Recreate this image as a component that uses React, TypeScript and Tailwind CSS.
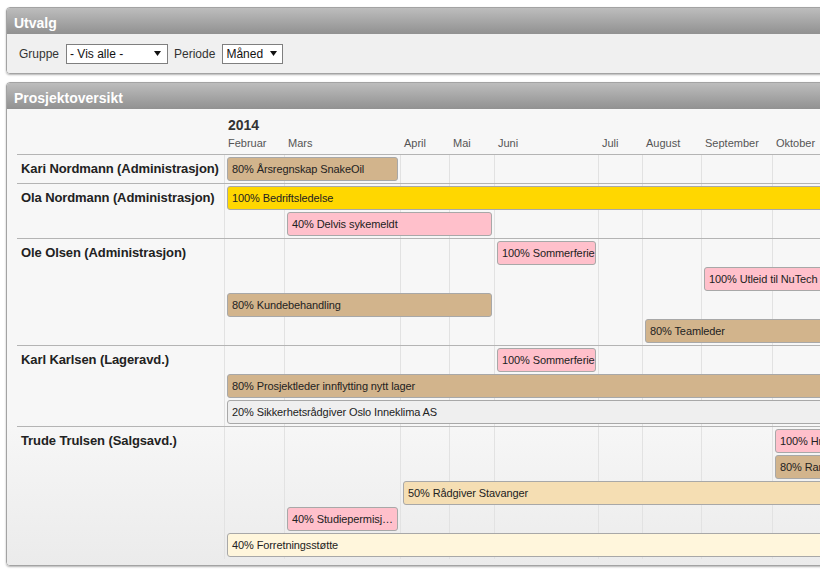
import React from "react";

const COLS = "grid-cols-[207px_60px_116px_49px_45px_104px_44px_59px_71px_70px_70px_70px]";

const months = [
  "Februar",
  "Mars",
  "April",
  "Mai",
  "Juni",
  "Juli",
  "August",
  "September",
  "Oktober",
  "November",
  "Desember",
];

type Bar = { from: number; to?: number; label: string; color: string };
type Person = { name: string; lanes: Bar[] };

const TAN = "bg-[#d2b48c]";
const GOLD = "bg-[#ffd700]";
const PINK = "bg-[#ffc0cb]";
const GRAY = "bg-[#efefef]";
const WHEAT = "bg-[#f5deb3]";
const CORNSILK = "bg-[#fff6dc]";

const people: Person[] = [
  {
    name: "Kari Nordmann (Administrasjon)",
    lanes: [{ from: 0, to: 2, label: "80% Årsregnskap SnakeOil", color: TAN }],
  },
  {
    name: "Ola Nordmann (Administrasjon)",
    lanes: [
      { from: 0, label: "100% Bedriftsledelse", color: GOLD },
      { from: 1, to: 4, label: "40% Delvis sykemeldt", color: PINK },
    ],
  },
  {
    name: "Ole Olsen (Administrasjon)",
    lanes: [
      { from: 4, to: 5, label: "100% Sommerferie", color: PINK },
      { from: 7, label: "100% Utleid til NuTech", color: PINK },
      { from: 0, to: 4, label: "80% Kundebehandling", color: TAN },
      { from: 6, label: "80% Teamleder", color: TAN },
    ],
  },
  {
    name: "Karl Karlsen (Lageravd.)",
    lanes: [
      { from: 4, to: 5, label: "100% Sommerferie", color: PINK },
      { from: 0, label: "80% Prosjektleder innflytting nytt lager", color: TAN },
      { from: 0, label: "20% Sikkerhetsrådgiver Oslo Inneklima AS", color: GRAY },
    ],
  },
  {
    name: "Trude Trulsen (Salgsavd.)",
    lanes: [
      { from: 8, label: "100% Hr-rådgivning", color: PINK },
      { from: 8, label: "80% Rammeavtale", color: TAN },
      { from: 2, label: "50% Rådgiver Stavanger", color: WHEAT },
      { from: 1, to: 2, label: "40% Studiepermisjon våren 2014", color: PINK },
      { from: 0, label: "40% Forretningsstøtte", color: CORNSILK },
    ],
  },
];

function Caret() {
  return (
    <svg width="7" height="5" viewBox="0 0 7 5" className="shrink-0">
      <path d="M0 0h7L3.5 5z" fill="#111" />
    </svg>
  );
}

function Panel({ title, children }: { title: string; children: React.ReactNode }) {
  return (
    <div className="w-[1000px] overflow-hidden rounded-[4px] border border-[#a3a3a3] shadow-[0_1px_2px_rgba(0,0,0,0.3)]">
      <div className="h-[26px] bg-gradient-to-b from-[#bdbdbd] to-[#919191] pl-[7px] pt-[4px] text-[14px] font-bold leading-[22px] text-white">
        {title}
      </div>
      {children}
    </div>
  );
}

function PersonRow({ person }: { person: Person }) {
  const n = person.lanes.length;
  return (
    <div
      className={`grid ${COLS} gap-y-[2px] border-t border-[#b4b4b4]`}
      style={{ gridTemplateRows: `0px repeat(${n}, 24px) 0px` }}
    >
      <div
        className="whitespace-nowrap pl-[4px] pt-[6px] text-[13px] font-bold leading-[16px] tracking-[-0.1px] text-[#222]"
        style={{ gridColumn: 1, gridRow: "1 / -1" }}
      >
        {person.name}
      </div>
      {months.map((m, i) => (
        <div
          key={m}
          className="border-l border-[#e2e2e2]"
          style={{ gridColumn: i + 2, gridRow: "1 / -1" }}
        />
      ))}
      {person.lanes.map((b, i) => (
        <div
          key={i}
          className={`ml-[3px] mr-[2px] h-[24px] overflow-hidden text-ellipsis whitespace-nowrap rounded-[3px] border border-[#a8a8a8] pl-[4px] text-[11px] leading-[22px] tracking-[-0.1px] text-[#222] ${b.color}`}
          style={{
            gridColumn: `${b.from + 2} / ${b.to === undefined ? -1 : b.to + 2}`,
            gridRow: i + 2,
          }}
        >
          {b.label}
        </div>
      ))}
    </div>
  );
}

export default function App() {
  return (
    <div className="h-screen w-screen overflow-hidden bg-white pl-[6px] pt-[7px] font-['Liberation_Sans',Arial,sans-serif]">
      <Panel title="Utvalg">
        <div className="flex h-[39px] items-center bg-[#f0f0f0] pl-[12px] text-[12px] text-[#333]">
          <span className="mr-[7px]">Gruppe</span>
          <div className="flex h-[20px] w-[102px] items-center justify-between border border-[#7f7f7f] bg-white pl-[3px] pr-[6px] text-[#111]">
            <span>- Vis alle -</span>
            <Caret />
          </div>
          <span className="ml-[6px] mr-[7px]">Periode</span>
          <div className="flex h-[20px] w-[61px] items-center justify-between border border-[#7f7f7f] bg-white pl-[3px] pr-[5px] text-[#111]">
            <span>Måned</span>
            <Caret />
          </div>
        </div>
      </Panel>

      <div className="mt-[8px]">
        <Panel title="Prosjektoversikt">
          <div className="bg-[linear-gradient(to_bottom,#f7f7f7_0%,#f7f7f7_68%,#ebebeb_100%)] pb-[6px] pl-[10px]">
            <div className="pb-[4px] pt-[8px]">
              <div className={`grid ${COLS}`}>
                <div />
                <div className="col-span-3 pl-[4px] text-[14px] font-bold leading-[17px] text-[#333]">
                  2014
                </div>
              </div>
              <div className={`mt-[2px] grid ${COLS} text-[11px] leading-[14px] text-[#555]`}>
                <div />
                {months.map((m) => (
                  <div key={m} className="overflow-hidden whitespace-nowrap pl-[4px]">
                    {m}
                  </div>
                ))}
              </div>
            </div>
            {people.map((p) => (
              <PersonRow key={p.name} person={p} />
            ))}
          </div>
        </Panel>
      </div>
    </div>
  );
}
